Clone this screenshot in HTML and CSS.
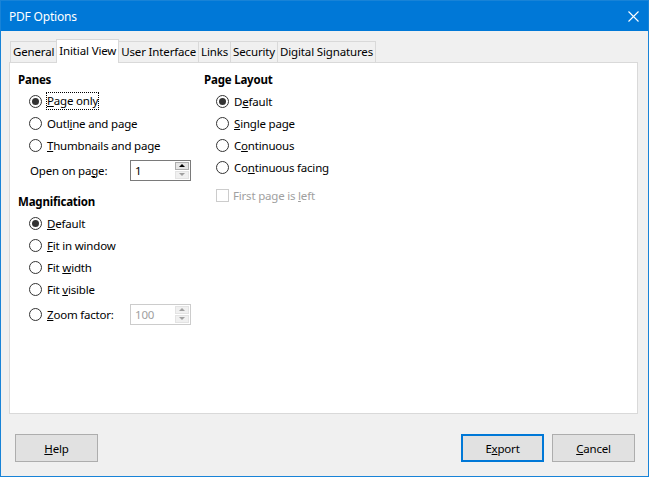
FILE: index.html
```html
<!DOCTYPE html>
<html lang="en">
<head>
<meta charset="UTF-8">
<title>PDF Options</title>
<link rel="stylesheet" href="styles.css">
</head>
<body>
<div class="window">
  <div class="titlebar">
    <span class="title">PDF Options</span>
    <svg class="close" width="11" height="11" viewBox="0 0 11 11">
      <path d="M0.5 0.5 L10.5 10.5 M10.5 0.5 L0.5 10.5" stroke="#fff" stroke-width="1.1" fill="none"/>
    </svg>
  </div>

  <div class="main">
    <div class="tabs">
      <div class="tab">General</div>
      <div class="tab active">Initial View</div>
      <div class="tab">User Interface</div>
      <div class="tab">Links</div>
      <div class="tab">Security</div>
      <div class="tab">Digital Signatures</div>
    </div>

    <div class="panel">
      <div class="col col-left">
        <div class="heading">Panes</div>
        <div class="opt"><span class="radio checked"></span><span class="focus"><u>P</u>age only</span></div>
        <div class="opt"><span class="radio"></span><span class="lbl">Outl<u>i</u>ne and page</span></div>
        <div class="opt"><span class="radio"></span><span class="lbl"><u>T</u>humbnails and page</span></div>
        <div class="field-row">
          <span class="field-label">Open on pa<u>g</u>e:</span>
          <div class="spin">
            <span class="spin-value">1</span>
            <div class="spin-btns">
              <span class="spin-up"><span class="arrow-up"></span></span>
              <span class="spin-down off"><span class="arrow-down"></span></span>
            </div>
          </div>
        </div>

        <div class="heading heading-gap">Magnification</div>
        <div class="opt"><span class="radio checked"></span><span class="lbl"><u>D</u>efault</span></div>
        <div class="opt"><span class="radio"></span><span class="lbl"><u>F</u>it in window</span></div>
        <div class="opt"><span class="radio"></span><span class="lbl">Fit <u>w</u>idth</span></div>
        <div class="opt"><span class="radio"></span><span class="lbl">Fit <u>v</u>isible</span></div>
        <div class="opt opt-field">
          <span class="radio"></span><span class="lbl zoom-lbl"><u>Z</u>oom factor:</span>
          <div class="spin disabled">
            <span class="spin-value">100</span>
            <div class="spin-btns">
              <span class="spin-up off"><span class="arrow-up"></span></span>
              <span class="spin-down off"><span class="arrow-down"></span></span>
            </div>
          </div>
        </div>
      </div>

      <div class="col col-right">
        <div class="heading">Page Layout</div>
        <div class="opt"><span class="radio checked"></span><span class="lbl">D<u>e</u>fault</span></div>
        <div class="opt"><span class="radio"></span><span class="lbl"><u>S</u>ingle page</span></div>
        <div class="opt"><span class="radio"></span><span class="lbl">C<u>o</u>ntinuous</span></div>
        <div class="opt"><span class="radio"></span><span class="lbl">Co<u>n</u>tinuous facing</span></div>
        <div class="opt opt-check disabled"><span class="check"></span><span class="lbl">First page is <u>l</u>eft</span></div>
      </div>
    </div>

    <div class="buttons">
      <button type="button" class="btn"><u>H</u>elp</button>
      <button type="button" class="btn btn-default">E<u>x</u>port</button>
      <button type="button" class="btn"><u>C</u>ancel</button>
    </div>
  </div>
</div>
</body>
</html>
```

FILE: styles.css
```css
body {
  margin: 0;
  font-family: "Noto Sans", "Open Sans", sans-serif;
  font-size: 11.5px;
  letter-spacing: -0.2px;
  color: #000;
}

.window {
  width: 649px;
  height: 477px;
  box-sizing: border-box;
  border: 1px solid #1883d7;
  background-color: #f0f0f0;
  display: flex;
  flex-direction: column;
}

.titlebar {
  height: 30px;
  flex: none;
  background-color: #0078d7;
  color: #fff;
  display: flex;
  align-items: center;
  justify-content: space-between;
  padding: 0 9px 0 8px;
}

.title {
  font-size: 12px;
}

.main {
  flex: 1;
  display: flex;
  flex-direction: column;
  padding: 8px 10px 14px 8px;
}

/* tabs */
.tabs {
  display: flex;
  align-items: flex-end;
  height: 23px;
  padding-left: 1px;
}

.tab {
  height: 21px;
  box-sizing: border-box;
  line-height: 19px;
  padding: 0 2px;
  letter-spacing: -0.15px;
  border: 1px solid #d9d9d9;
  border-bottom: none;
  margin-left: -1px;
  background-color: #f0f0f0;
}

.tab:first-child {
  margin-left: 0;
}

.tab.active {
  height: 24px;
  line-height: 21px;
  margin-bottom: -1px;
  background-color: #fff;
  position: relative;
  z-index: 1;
}

/* panel */
.panel {
  flex: 1;
  background-color: #fff;
  border: 1px solid #d9d9d9;
  display: flex;
  padding: 9px 8px;
}

.col-left {
  width: 186px;
}

.heading {
  font-weight: bold;
  line-height: 16px;
  margin-bottom: 2px;
}

.heading-gap {
  margin-top: 10px;
}

.opt {
  display: flex;
  align-items: center;
  height: 22px;
  padding-left: 11px;
}

.col-right .opt {
  padding-left: 12px;
}

.radio {
  width: 13px;
  height: 13px;
  box-sizing: border-box;
  border: 1px solid #333;
  border-radius: 50%;
  background-color: #fff;
  display: flex;
  align-items: center;
  justify-content: center;
  margin-right: 5px;
  flex: none;
}

.radio.checked::after {
  content: "";
  width: 7px;
  height: 7px;
  border-radius: 50%;
  background-color: #333;
}

.focus {
  outline: 1px dotted #000;
  outline-offset: 0;
  line-height: 16px;
}

.check {
  width: 13px;
  height: 13px;
  box-sizing: border-box;
  border: 1px solid #cccccc;
  background-color: #fff;
  margin-right: 4px;
  flex: none;
}

.opt-check {
  margin-top: 6px;
}

.disabled .lbl {
  color: #a0a0a0;
}

.opt-field {
  height: 28px;
}

.zoom-lbl {
  width: 83px;
}

.field-row {
  display: flex;
  align-items: center;
  height: 28px;
  padding-left: 12px;
}

.field-label {
  width: 100px;
}

/* spin box */
.spin {
  width: 61px;
  height: 21px;
  box-sizing: border-box;
  border: 1px solid #7a7a7a;
  background-color: #fff;
  display: flex;
  align-items: stretch;
}

.spin-value {
  flex: 1;
  padding-left: 4px;
  line-height: 19px;
}

.spin.disabled {
  border-color: #cccccc;
}

.spin.disabled .spin-value {
  color: #a0a0a0;
}

.spin-btns {
  width: 14px;
  display: flex;
  flex-direction: column;
  padding: 1px 1px 1px 0;
  gap: 1px;
}

.spin-up, .spin-down {
  flex: 1;
  display: flex;
  align-items: center;
  justify-content: center;
  box-sizing: border-box;
  background-color: #e5e5e5;
  border: 1px solid #adadad;
}

.spin-up.off, .spin-down.off {
  background-color: #f0f0f0;
  border-color: #e3e3e3;
}

.arrow-up {
  width: 0;
  height: 0;
  border-left: 3px solid transparent;
  border-right: 3px solid transparent;
  border-bottom: 3px solid #000;
}

.arrow-down {
  width: 0;
  height: 0;
  border-left: 3px solid transparent;
  border-right: 3px solid transparent;
  border-top: 3px solid #000;
}

.off .arrow-up {
  border-bottom-color: #a0a0a0;
}

.off .arrow-down {
  border-top-color: #a0a0a0;
}

/* buttons */
.buttons {
  display: flex;
  gap: 8px;
  margin-top: 20px;
  padding: 0 3px 0 6px;
}

.btn {
  width: 83px;
  height: 28px;
  box-sizing: border-box;
  border: 1px solid #adadad;
  background-color: #e1e1e1;
  font-family: "Noto Sans", "Open Sans", sans-serif;
  font-size: 11.5px;
  letter-spacing: -0.2px;
  color: #000;
  padding: 0;
}

.btn-default {
  margin-left: auto;
  border: 2px solid #0078d7;
}
```
